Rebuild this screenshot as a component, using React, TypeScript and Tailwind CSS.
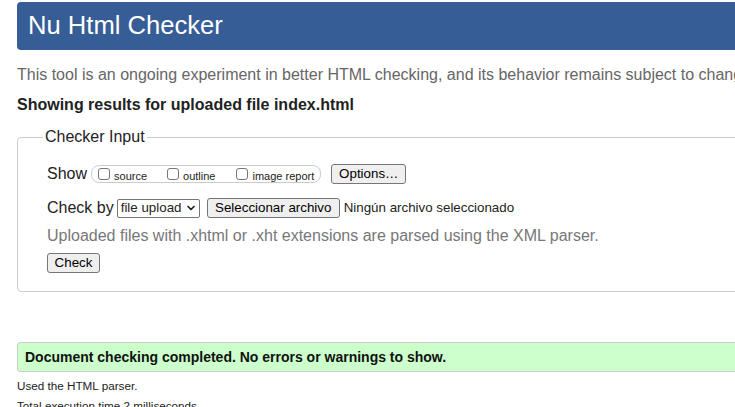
import { ChevronDown } from 'lucide-react'

export default function App() {
  return (
    <div className="w-[735px] h-[407px] overflow-hidden bg-white font-['Liberation_Sans',Arial,sans-serif] text-[#222]">
      <div className="w-[820px] pl-[17px] pt-[2px]">
        {/* Header */}
        <div className="h-[48px] rounded-[4px] bg-[#365d95] flex items-center pl-[11px]">
          <h1 className="text-[25.6px] leading-none text-white">Nu Html Checker</h1>
        </div>

        <p className="mt-[15px] text-[16px] leading-[20px] text-[#666] whitespace-nowrap">
          This tool is an ongoing experiment in better HTML checking, and its behavior remains subject to change
        </p>
        <p className="mt-[10px] text-[16px] leading-[20px] font-bold whitespace-nowrap">
          Showing results for uploaded file index.html
        </p>

        {/* Checker Input */}
        <fieldset className="mt-[13px] border border-[#ccc] rounded-[4px] pl-[29px] pt-[18px] pb-[18px]">
          <legend className="ml-[-4px] px-[2px] text-[16px] leading-[18px]">Checker Input</legend>

          <div className="flex items-center h-[20px]">
            <span className="text-[16px] leading-[20px] mr-[4px]">Show</span>
            <div className="flex items-center h-[18px] border border-[#ccc] rounded-[8px] pl-[6px] pr-[6px]">
              <Check label="source" />
              <Check label="outline" className="ml-[20px]" />
              <Check label="image report" className="ml-[21px]" />
            </div>
            <Btn className="ml-[10px] w-[75px]">Options…</Btn>
          </div>

          <div className="flex items-center h-[20px] mt-[14px]">
            <span className="text-[16px] leading-[20px] mr-[3px]">Check by</span>
            <div className="flex items-center justify-between w-[83px] h-[19px] border border-[#767676] rounded-[2px] pl-[3px] pr-[2px] text-[13.33px] bg-white">
              <span>file upload</span>
              <ChevronDown size={12} strokeWidth={3.5} />
            </div>
            <Btn className="ml-[7px] w-[133px]">Seleccionar archivo</Btn>
            <span className="ml-[4px] text-[13.33px] whitespace-nowrap">Ningún archivo seleccionado</span>
          </div>

          <p className="mt-[8px] text-[16px] leading-[20px] text-[#777] whitespace-nowrap">
            Uploaded files with .xhtml or .xht extensions are parsed using the XML parser.
          </p>

          <div className="mt-[7px] flex">
            <Btn className="w-[53px]">Check</Btn>
          </div>
        </fieldset>

        {/* Result */}
        <div className="mt-[50px] h-[30px] flex items-center pl-[7px] bg-[#ccffcc] border border-[#ccc] rounded-[3px]">
          <p className="text-[14px] font-bold text-[#111]">Document checking completed. No errors or warnings to show.</p>
        </div>

        <p className="mt-[7px] text-[11.7px] leading-[14px]">Used the HTML parser.</p>
        <p className="mt-[6px] text-[11.7px] leading-[14px]">Total execution time 2 milliseconds.</p>
      </div>
    </div>
  )
}

function Check({ label, className = '' }: { label: string; className?: string }) {
  return (
    <label className={`flex items-center ${className}`}>
      <span className="w-[12px] h-[12px] border border-[#767676] rounded-[3px] bg-white" />
      <span className="ml-[4px] text-[11px] leading-[12px] mt-[3px]">{label}</span>
    </label>
  )
}

function Btn({ children, className = '' }: { children: React.ReactNode; className?: string }) {
  return (
    <button
      className={`h-[20px] flex items-center justify-center border border-[#767676] rounded-[3px] bg-[#efefef] text-[13.33px] text-black whitespace-nowrap ${className}`}
    >
      {children}
    </button>
  )
}
